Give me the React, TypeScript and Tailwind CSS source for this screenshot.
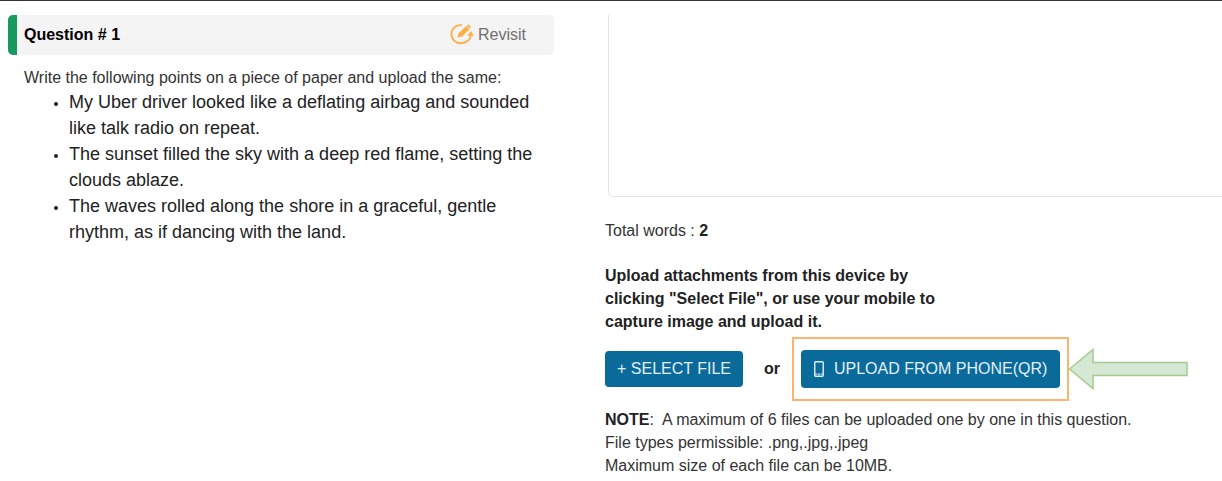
import React from "react";

const points = [
  "My Uber driver looked like a deflating airbag and sounded like talk radio on repeat.",
  "The sunset filled the sky with a deep red flame, setting the clouds ablaze.",
  "The waves rolled along the shore in a graceful, gentle rhythm, as if dancing with the land.",
];

function RevisitIcon() {
  return (
    <svg className="h-6 w-6" viewBox="0 0 24 24" fill="none" aria-hidden="true">
      <path
        d="M11.8 2.2 C6 1.4 1.4 5.8 1.4 11 C1.4 16.6 5.8 20.2 11 20.2 C16.6 20.2 20.6 16.6 20.9 12"
        stroke="#fdb04f"
        strokeWidth="1.9"
      />
      <path d="M17 12.8 L21 8 L24 12.8 Z" fill="#fdb04f" />
      <path d="M7.6 14.6 L8.6 10.2 L16.2 3 L19.4 6.2 L12.2 13.4 Z" fill="#fdae49" />
      <path d="M16.8 2.4 L18.2 1.2 L21.1 4 L19.9 5.4 Z" fill="#fdae49" />
    </svg>
  );
}

function PhoneIcon() {
  return (
    <svg className="h-4 w-[10px]" viewBox="0 0 10 16" fill="none" aria-hidden="true">
      <rect x="0.75" y="0.75" width="8.5" height="14.5" rx="1" stroke="#e2eff6" strokeWidth="1.4" />
      <path d="M1 13 H3.3 M6.7 13 H9" stroke="#e2eff6" strokeWidth="1" />
      <circle cx="5" cy="13.2" r="0.9" fill="#e2eff6" />
    </svg>
  );
}

function PointerArrow() {
  return (
    <svg className="-ml-px h-[42px] w-[120px] shrink-0" viewBox="0 0 120 42" aria-hidden="true">
      <path
        d="M1.5 21 L25 1.5 V14.5 H119 V27.5 H25 V40.5 Z"
        fill="#d5e8d4"
        stroke="#a3cb8f"
        strokeWidth="1.5"
      />
    </svg>
  );
}

export default function App() {
  return (
    <div className="overflow-hidden border-t border-[#333] bg-white font-['Liberation_Sans',Arial,sans-serif] text-base text-[#333]">
      <main className="grid grid-cols-[minmax(0,546fr)_minmax(0,617fr)] gap-[51px] pt-[14px] pl-2">
        <section>
          <header className="flex h-10 items-center justify-between rounded-[5px] border-l-9 border-[#17995f] bg-[#f4f4f4] pr-7 pl-[7px]">
            <h1 className="font-bold text-black">Question # 1</h1>
            <button type="button" className="flex items-center gap-1 text-[#707070]">
              <RevisitIcon />
              Revisit
            </button>
          </header>
          <div className="pt-3 pr-4 pl-4">
            <p className="leading-[22px]">Write the following points on a piece of paper and upload the same:</p>
            <ul className="list-disc pl-[45px] text-lg leading-[26px] text-[#222] marker:text-sm">
              {points.map((point) => (
                <li key={point}>{point}</li>
              ))}
            </ul>
          </div>
        </section>

        <section>
          <textarea
            aria-label="Answer"
            className="ml-[3px] block h-[182px] w-full resize-none rounded-bl-[5px] border-b border-l border-[#e4e4e4] p-3 outline-none"
          />
          <p className="pt-[23px] leading-[22px]">
            Total words : <b className="text-[#222]">2</b>
          </p>
          <p className="mt-[22px] w-[340px] leading-[23px] font-bold text-[#222]">
            Upload attachments from this device by clicking "Select File", or use your mobile to capture image and upload it.
          </p>
          <div className="mt-1 flex items-center">
            <button type="button" className="h-9 shrink-0 rounded bg-[#0a6a9a] px-3 text-[#e2eff6]">
              + SELECT FILE
            </button>
            <span className="pr-3 pl-[21px] font-bold text-[#222]">or</span>
            <div className="shrink-0 border-2 border-[#fdb46f] px-[7px] py-[11px]">
              <button
                type="button"
                className="flex h-[38px] items-center gap-[10px] rounded bg-[#0a6a9a] px-[13px] text-[#e2eff6]"
              >
                <PhoneIcon />
                UPLOAD FROM PHONE(QR)
              </button>
            </div>
            <PointerArrow />
          </div>
          <div className="mt-[7px] leading-[23px]">
            <p>
              <b className="text-[#222]">NOTE</b>:&nbsp; A maximum of 6 files can be uploaded one by one in this question.
            </p>
            <p>File types permissible: .png,.jpg,.jpeg</p>
            <p>Maximum size of each file can be 10MB.</p>
          </div>
        </section>
      </main>
    </div>
  );
}
